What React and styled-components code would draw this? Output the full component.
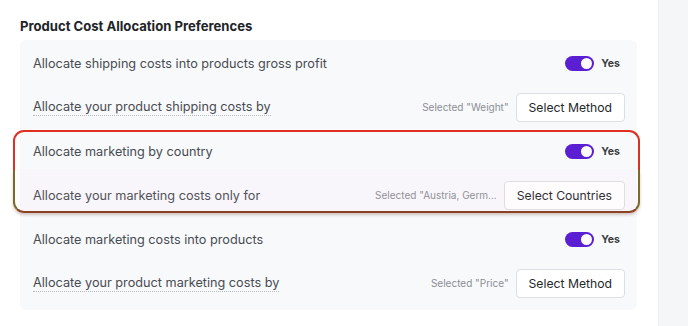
import styled, { createGlobalStyle } from 'styled-components';

const Global = createGlobalStyle`
  body {
    margin: 0;
    background: #ffffff;
    font-family: Inter, "Noto Sans", sans-serif;
    -webkit-font-smoothing: antialiased;
  }
`;

const Page = styled.div`
  display: flex;
  height: 326px;
  overflow: hidden;
`;

const Main = styled.div`
  width: 658px;
  flex: none;
  padding: 17px 21px 0 20px;
  box-sizing: border-box;
`;

const Sidebar = styled.div`
  flex: 1;
  background: #f5f6f8;
  border-left: 1px solid #eceef1;
`;

const Title = styled.h3`
  margin: 0 0 5px;
  font-size: 13.1px;
  line-height: 18px;
  font-weight: 700;
  color: #212428;
`;

const Card = styled.div`
  background: #f8f9fb;
  border-radius: 6px;
  padding: 1px 12px 5px 13px;
`;

const Row = styled.div`
  display: flex;
  align-items: center;
  justify-content: space-between;
  height: 44px;
`;

const Label = styled.span`
  font-size: 12.7px;
  color: #484c52;
  padding-bottom: ${p => (p.$dotted ? '1px' : '0')};
  border-bottom: ${p => (p.$dotted ? '1px dotted #b9bdc3' : 'none')};
`;

const Right = styled.div`
  display: flex;
  align-items: center;
  gap: 7px;
`;

const Track = styled.span`
  display: inline-flex;
  justify-content: flex-end;
  align-items: center;
  width: 29px;
  height: 15px;
  border-radius: 8px;
  background: #5a1fd3;
  padding: 0 2px;
  box-sizing: border-box;
`;

const Knob = styled.span`
  width: 11px;
  height: 11px;
  border-radius: 50%;
  background: #fdfbff;
`;

const Yes = styled.span`
  font-size: 10.5px;
  font-weight: 700;
  color: #3a3d42;
  margin-right: 5px;
`;

const Hint = styled.span`
  font-size: 10px;
  color: #8a8e94;
`;

const Button = styled.button`
  height: 29px;
  padding: 0 12px;
  background: #ffffff;
  border: 1px solid #dcdfe3;
  border-radius: 4px;
  font-family: inherit;
  font-size: 12.2px;
  color: #24272b;
`;

const Highlight = styled.div`
  position: relative;
  &::before, &::after {
    content: '';
    position: absolute;
    left: -20px;
    right: -15px;
    pointer-events: none;
  }
  &::before {
    top: 1px;
    height: 38px;
    border: 2px solid #de2f22;
    border-bottom: none;
    border-radius: 11px 11px 0 0;
  }
  &::after {
    top: 41px;
    height: 41px;
    border: 2px solid #7b6a2c;
    border-top: none;
    border-bottom-color: #8c4224;
    border-radius: 0 0 11px 11px;
    box-shadow: 0 2px 3px rgba(90, 40, 20, 0.25);
    background: rgba(255, 205, 240, 0.06);
  }
`;

function Toggle() {
  return (
    <Right>
      <Track><Knob /></Track>
      <Yes>Yes</Yes>
    </Right>
  );
}

function Picker({ hint, label }) {
  return (
    <Right>
      <Hint>{hint}</Hint>
      <Button>{label}</Button>
    </Right>
  );
}

export default function App() {
  return (
    <Page>
      <Global />
      <Main>
        <Title>Product Cost Allocation Preferences</Title>
        <Card>
          <Row>
            <Label>Allocate shipping costs into products gross profit</Label>
            <Toggle />
          </Row>
          <Row>
            <Label $dotted>Allocate your product shipping costs by</Label>
            <Picker hint='Selected "Weight"' label="Select Method" />
          </Row>
          <Highlight>
            <Row>
              <Label>Allocate marketing by country</Label>
              <Toggle />
            </Row>
            <Row>
              <Label>Allocate your marketing costs only for</Label>
              <Picker hint='Selected "Austria, Germ...' label="Select Countries" />
            </Row>
          </Highlight>
          <Row>
            <Label>Allocate marketing costs into products</Label>
            <Toggle />
          </Row>
          <Row>
            <Label $dotted>Allocate your product marketing costs by</Label>
            <Picker hint='Selected "Price"' label="Select Method" />
          </Row>
        </Card>
      </Main>
      <Sidebar />
    </Page>
  );
}
